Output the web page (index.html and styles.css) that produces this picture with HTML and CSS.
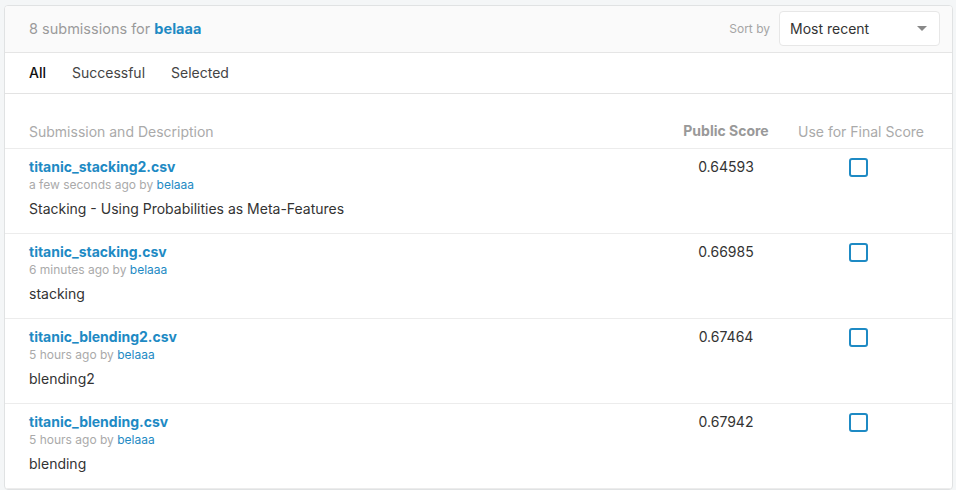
FILE: index.html
```html
<!DOCTYPE html>
<html>
<head>
<meta charset="utf-8">
<link rel="stylesheet" href="styles.css">
</head>
<body>
<div class="card">
  <div class="card-head">
    <div class="count">8 submissions for <a class="user-link">belaaa</a></div>
    <div class="sort">
      <span class="sort-label">Sort by</span>
      <div class="select">
        <span>Most recent</span>
        <span class="caret"></span>
      </div>
    </div>
  </div>
  <div class="tabs">
    <span class="tab active">All</span>
    <span class="tab">Successful</span>
    <span class="tab">Selected</span>
  </div>
  <div class="table">
    <div class="row head-row">
      <div class="col-desc">Submission and Description</div>
      <div class="col-score strong">Public Score</div>
      <div class="col-final">Use for Final Score</div>
    </div>
    <div class="row">
      <div class="col-desc">
        <a class="file">titanic_stacking2.csv</a>
        <div class="meta">a few seconds ago by <a class="meta-link">belaaa</a></div>
        <div class="desc">Stacking - Using Probabilities as Meta-Features</div>
      </div>
      <div class="col-score">0.64593</div>
      <div class="col-final"><span class="checkbox"></span></div>
    </div>
    <div class="row">
      <div class="col-desc">
        <a class="file">titanic_stacking.csv</a>
        <div class="meta">6 minutes ago by <a class="meta-link">belaaa</a></div>
        <div class="desc">stacking</div>
      </div>
      <div class="col-score">0.66985</div>
      <div class="col-final"><span class="checkbox"></span></div>
    </div>
    <div class="row">
      <div class="col-desc">
        <a class="file">titanic_blending2.csv</a>
        <div class="meta">5 hours ago by <a class="meta-link">belaaa</a></div>
        <div class="desc">blending2</div>
      </div>
      <div class="col-score">0.67464</div>
      <div class="col-final"><span class="checkbox"></span></div>
    </div>
    <div class="row">
      <div class="col-desc">
        <a class="file">titanic_blending.csv</a>
        <div class="meta">5 hours ago by <a class="meta-link">belaaa</a></div>
        <div class="desc">blending</div>
      </div>
      <div class="col-score">0.67942</div>
      <div class="col-final"><span class="checkbox"></span></div>
    </div>
  </div>
</div>
</body>
</html>
```
FILE: styles.css
```css
html, body {
  margin: 0;
  background: #f4f6f7;
}
body {
  padding: 5px 0 0 4px;
  font-family: Inter, "Liberation Sans", Arial, sans-serif;
  color: #333;
}
a { text-decoration: none; }

.card {
  width: 949px;
  box-sizing: border-box;
  background: #fff;
  border: 1px solid #e0e2e3;
  border-radius: 4px;
  overflow: hidden;
}

.card-head {
  display: flex;
  align-items: center;
  justify-content: space-between;
  height: 47px;
  box-sizing: border-box;
  padding: 0 12px 1px 24px;
  background: #fafafa;
  border-bottom: 1px solid #e5e5e5;
}
.count {
  font-size: 14.5px;
  color: #9a9a9a;
}
.user-link {
  color: #1e8ac4;
  font-weight: bold;
}
.sort {
  display: flex;
  align-items: center;
  gap: 9px;
}
.sort-label {
  font-size: 12px;
  color: #a5a5a5;
}
.select {
  box-sizing: border-box;
  width: 161px;
  height: 35px;
  background: #fff;
  border: 1px solid #e7e7e7;
  border-radius: 4px;
  display: flex;
  align-items: center;
  justify-content: space-between;
  padding: 0 12px 1px 10px;
  font-size: 14px;
  color: #333;
}
.caret {
  width: 0;
  height: 0;
  margin-top: 1px;
  border-left: 5px solid transparent;
  border-right: 5px solid transparent;
  border-top: 5px solid #888;
}

.tabs {
  display: flex;
  gap: 26px;
  align-items: center;
  height: 41px;
  box-sizing: border-box;
  padding: 0 24px 1px;
  border-bottom: 1px solid #e3e3e3;
  font-size: 14px;
  color: #444;
}
.tab.active {
  color: #111;
  font-weight: 500;
}

.table {
  padding-top: 20px;
}
.row {
  display: grid;
  grid-template-columns: 1fr 110px 160px;
  padding: 0 11px 0 24px;
  border-bottom: 1px solid #ececec;
  height: 84px;
}
.head-row {
  height: 34px;
  align-items: center;
  font-size: 14px;
  color: #aaa;
}
.col-score,
.col-final {
  text-align: center;
}
.row .col-desc,
.row .col-score,
.row .col-final {
  padding-top: 9px;
}
.head-row .col-desc,
.head-row .col-score,
.head-row .col-final {
  padding-top: 0;
}
.file {
  display: block;
  font-size: 14px;
  font-weight: bold;
  color: #1e8ac4;
  line-height: 18px;
}
.meta {
  font-size: 12px;
  color: #aaa;
  line-height: 16px;
  margin-top: 1px;
}
.meta-link {
  color: #1e8ac4;
}
.desc {
  font-size: 14px;
  color: #333;
  margin-top: 7px;
  line-height: 18px;
}
.row .col-score {
  font-size: 14px;
  color: #333;
  line-height: 18px;
}
.head-row .col-score.strong {
  font-weight: bold;
  color: #999;
}
.checkbox {
  display: inline-block;
  box-sizing: border-box;
  width: 19px;
  height: 19px;
  border: 2px solid #1e8ac4;
  border-radius: 3px;
  margin-right: 6px;
}
```
